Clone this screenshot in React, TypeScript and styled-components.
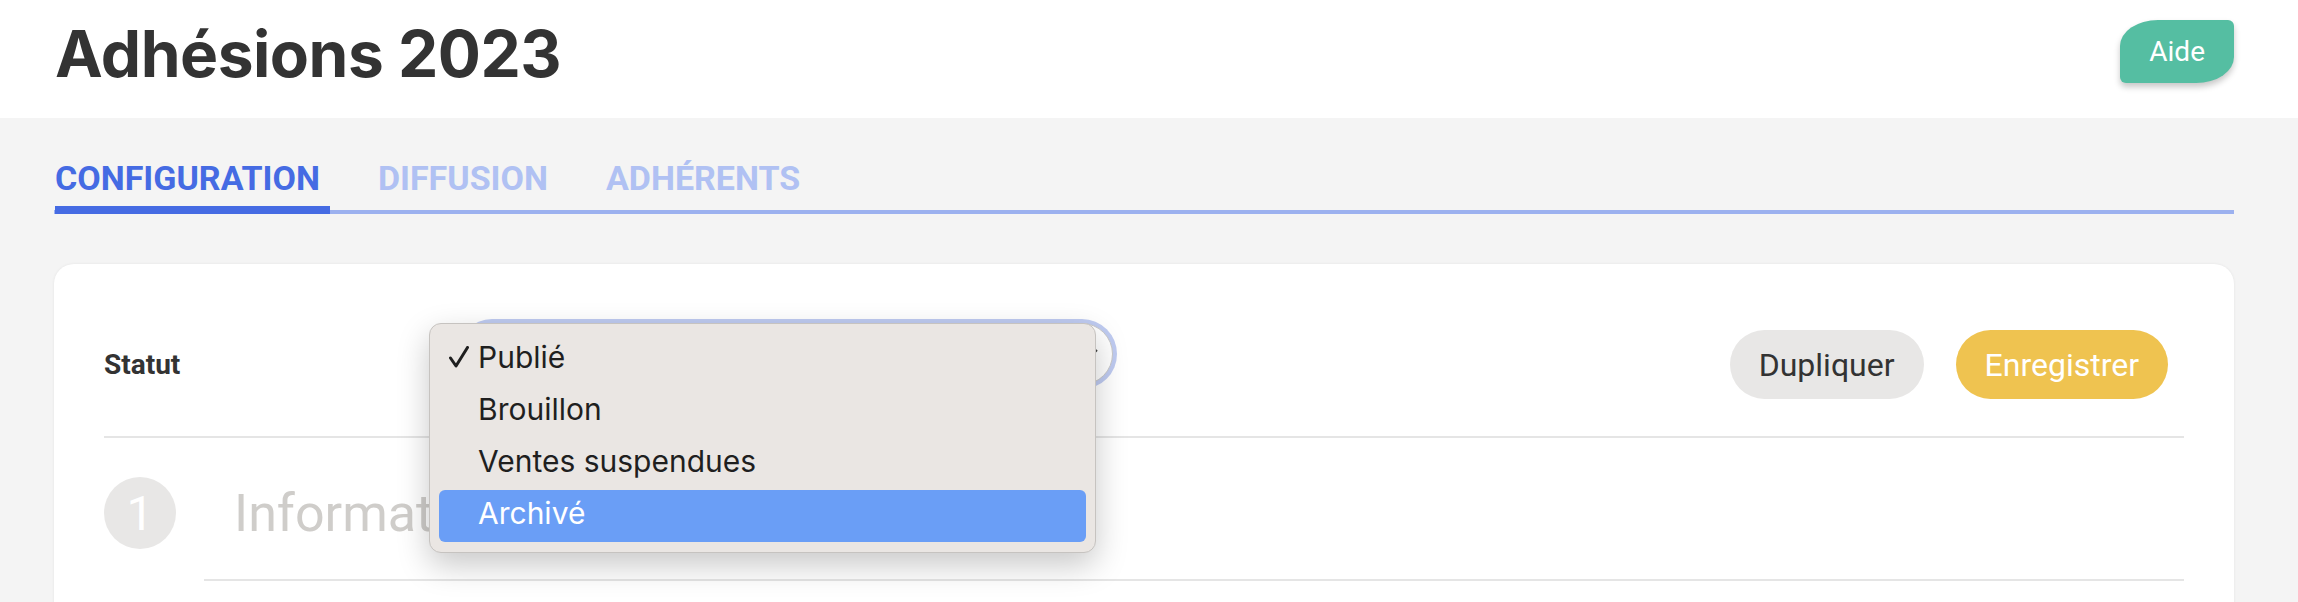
import React, { FC } from 'react'
import styled, { createGlobalStyle } from 'styled-components'

const GlobalStyle = createGlobalStyle`
  html, body {
    margin: 0;
    padding: 0;
    background: #f4f4f4;
    overflow: hidden;
  }
  body {
    font-family: Roboto, "Liberation Sans", sans-serif;
    color: #333;
  }
  * {
    box-sizing: border-box;
  }
`

const Header = styled.header`
  display: flex;
  align-items: flex-start;
  height: 118px;
  padding: 0 64px 0 55px;
  background: #fff;
`

const Title = styled.h1`
  margin: 22px 0 0;
  font-family: Inter, Roboto, sans-serif;
  font-size: 64px;
  line-height: 64px;
  font-weight: 700;
  letter-spacing: -0.5px;
  color: #333;
`

const HelpButton = styled.button`
  margin: 20px 0 0 auto;
  height: 63px;
  padding: 0 29px;
  border: none;
  border-radius: 38px 6px 38px 6px / 26px 6px 26px 6px;
  background: #55bea2;
  color: #fff;
  font-family: Roboto, sans-serif;
  font-size: 28px;
  font-weight: 400;
  box-shadow: 0 4px 6px rgba(0, 0, 0, 0.22);
`

const Main = styled.main`
  padding: 43px 64px 0 54px;
`

const TabBar = styled.nav`
  display: flex;
  gap: 48px;
  padding-left: 1px;
  border-bottom: 4px solid #9cb1ef;
`

const Tab = styled.a<{ $active?: boolean }>`
  display: block;
  margin-bottom: -4px;
  padding: 0 10px 11px 0;
  border-bottom: 8px solid ${p => (p.$active ? '#456be3' : 'transparent')};
  font-family: Roboto, sans-serif;
  font-size: 34px;
  line-height: 34px;
  font-weight: 700;
  color: ${p => (p.$active ? '#456be3' : '#b0c1f3')};
`

const Card = styled.section`
  margin-top: 50px;
  min-height: 400px;
  padding: 0 50px;
  border-radius: 20px;
  background: #fff;
  box-shadow: 0 0 3px rgba(0, 0, 0, 0.07);
`

const StatusRow = styled.div`
  display: flex;
  align-items: center;
  padding: 66px 0 37px;
  border-bottom: 2px solid #e5e5e5;
`

const Label = styled.label`
  width: 357px;
  font-size: 28px;
  font-weight: 700;
  color: #333;
`

const SelectWrap = styled.div`
  position: relative;
  margin-top: -22px;
`

const SelectBox = styled.div`
  display: flex;
  align-items: center;
  justify-content: flex-end;
  width: 652px;
  height: 62px;
  padding-right: 14px;
  border: 1px solid #c9c9c9;
  border-radius: 31px;
  background: #fff;
  box-shadow: 0 0 0 4px #bfcbf1;
`

const Menu = styled.ul`
  position: absolute;
  top: 0;
  left: -32px;
  width: 667px;
  margin: 0;
  padding: 10px 9px;
  list-style: none;
  border: 1px solid #c6c3c0;
  border-radius: 12px;
  background: #eae6e3;
  box-shadow: 0 12px 32px rgba(0, 0, 0, 0.22);
`

const MenuItem = styled.li<{ $highlighted?: boolean }>`
  display: flex;
  align-items: center;
  height: 52px;
  padding: 0 0 5px 10px;
  border-radius: 6px;
  background: ${p => (p.$highlighted ? '#6a9ef6' : 'transparent')};
  color: ${p => (p.$highlighted ? '#fff' : '#1f1f1f')};
  font-family: Inter, Roboto, sans-serif;
  font-size: 30px;
  line-height: 40px;
`

const CheckSlot = styled.span`
  display: flex;
  align-items: center;
  width: 29px;
  height: 100%;
`

const Actions = styled.div`
  display: flex;
  gap: 32px;
  margin: 0 16px 0 auto;
`

const PillButton = styled.button<{ $variant: 'light' | 'primary' }>`
  height: 69px;
  padding: 0 29px;
  border: none;
  border-radius: 35px;
  background: ${p => (p.$variant === 'primary' ? '#efc350' : '#e8e7e6')};
  color: ${p => (p.$variant === 'primary' ? '#fff' : '#333')};
  font-family: Roboto, sans-serif;
  font-size: 32px;
`

const StepHeader = styled.div`
  display: flex;
  align-items: center;
  gap: 58px;
  padding: 39px 0 30px;
`

const StepNumber = styled.span`
  display: flex;
  align-items: center;
  justify-content: center;
  width: 72px;
  height: 72px;
  border-radius: 50%;
  background: #e8e7e6;
  color: #fff;
  font-size: 48px;
`

const StepTitle = styled.h2`
  margin: 0;
  font-size: 52px;
  font-weight: 400;
  color: #cfcdca;
`

const StepBody = styled.div`
  margin-left: 100px;
  border-top: 2px solid #e5e5e5;
  height: 60px;
`

const Check: FC = () => (
  <svg width="20" height="22" viewBox="0 0 20 22">
    <polyline points="1.5,12 7,20 18.5,1.5" fill="none" stroke="#1f1f1f" strokeWidth="3" strokeLinecap="round" strokeLinejoin="round" />
  </svg>
)

const Chevron: FC = () => (
  <svg width="14" height="9" viewBox="0 0 14 9">
    <polyline points="1,1 7,7 13,1" fill="none" stroke="#444" strokeWidth="2" />
  </svg>
)

const statuses = ['Publié', 'Brouillon', 'Ventes suspendues', 'Archivé']

const App: FC = () => (
  <>
    <GlobalStyle />
    <Header>
      <Title>Adhésions 2023</Title>
      <HelpButton>Aide</HelpButton>
    </Header>
    <Main>
      <TabBar>
        <Tab $active>CONFIGURATION</Tab>
        <Tab>DIFFUSION</Tab>
        <Tab>ADHÉRENTS</Tab>
      </TabBar>
      <Card>
        <StatusRow>
          <Label>Statut</Label>
          <SelectWrap>
            <SelectBox>
              <Chevron />
            </SelectBox>
            <Menu>
              {statuses.map((status, i) => (
                <MenuItem key={status} $highlighted={i === statuses.length - 1}>
                  <CheckSlot>{i === 0 && <Check />}</CheckSlot>
                  {status}
                </MenuItem>
              ))}
            </Menu>
          </SelectWrap>
          <Actions>
            <PillButton $variant="light">Dupliquer</PillButton>
            <PillButton $variant="primary">Enregistrer</PillButton>
          </Actions>
        </StatusRow>
        <StepHeader>
          <StepNumber>1</StepNumber>
          <StepTitle>Informations</StepTitle>
        </StepHeader>
        <StepBody />
      </Card>
    </Main>
  </>
)

export default App
